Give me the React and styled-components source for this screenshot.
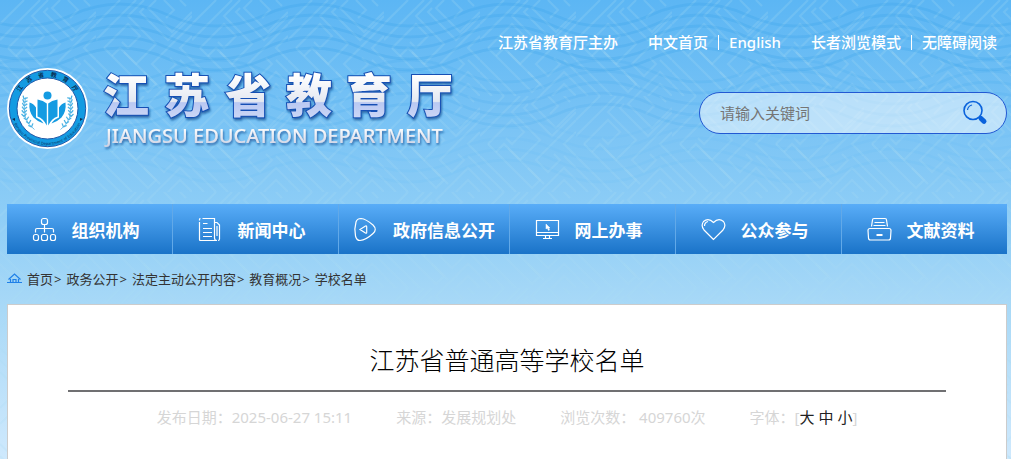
import React from 'react';
import styled, { createGlobalStyle } from 'styled-components';

const svgUrl = (svg) => `url("data:image/svg+xml,${encodeURIComponent(svg)}")`;

const wave = (y, crest) => {
  const up = `q48 -22 96 0 q48 22 97 0`;
  return `<path d="M${crest - 434} ${y + 11}${up}${up}${up}${up}"/>`;
};

const waves = svgUrl(`<svg xmlns="http://www.w3.org/2000/svg" width="193" height="200">
  <g fill="none" stroke="#349fe6" stroke-width="3">
    <g stroke-opacity=".25">${[4, 15, 26, 37, 48].map((y) => wave(y, 120)).join('')}</g>
    <g stroke-opacity=".15">${[60, 71, 82, 93, 104].map((y) => wave(y, 217)).join('')}</g>
    <g stroke-opacity=".06">${[116, 127, 138, 149, 160].map((y) => wave(y, 120)).join('')}</g>
  </g>
</svg>`);

const maze = svgUrl(`<svg xmlns="http://www.w3.org/2000/svg" width="96" height="96">
  <g fill="none" stroke="#a6dcf0" stroke-opacity=".22" stroke-width="2">
    <path d="M0 24L24 0M0 40L40 0M8 48L32 24L44 36L32 48L26 42M16 56L24 48L40 64L60 44L32 16L48 0"/>
    <path d="M48 8L44 12L72 40L96 16M60 0L52 8L76 32L96 12M68 0L78 10L70 18M84 0L96 -12M84 0L90 6"/>
    <path d="M0 60L36 96M0 72L24 96M0 84L12 96M8 48L52 92L60 84L28 52M96 24L56 64L68 76L80 64L74 58"/>
    <path d="M96 36L84 48L96 60M96 72L84 60M60 96L84 72L96 84M72 96L84 84L96 96M48 72L64 88"/>
  </g>
</svg>`);

const GlobalStyle = createGlobalStyle`
  * {
    box-sizing: border-box;
  }

  body {
    margin: 0;
    font-family: 'Noto Sans', 'Noto Sans CJK SC', sans-serif;
    font-size: 15px;
    color: #333;
    background:
      ${waves} repeat-x,
      ${maze},
      linear-gradient(#5cb6f4 0, #7bc4f5 130px, #8dcdf6 210px, #a9d9f7 310px, #cfe9fd 460px) no-repeat #cfe9fd;
  }

  a {
    color: inherit;
    text-decoration: none;
  }
`;

const Page = styled.div`
  display: flex;
  flex-direction: column;
  min-height: 100vh;
  padding: 0 4px 0 7px;
`;

const TopLinks = styled.div`
  display: flex;
  justify-content: flex-end;
  gap: 10px;
  padding-top: 32px;
`;

const LinkGroup = styled.div`
  display: flex;
  align-items: center;
  height: 20px;
`;

const TopLink = styled.a`
  padding: 0 10px;
  font-weight: 500;
  line-height: 15px;
  color: #fff;

  & + & {
    border-left: 1px solid #fff;
  }
`;

const Masthead = styled.header`
  display: flex;
  justify-content: space-between;
  align-items: flex-start;
  height: 152px;
  padding-top: 12px;
`;

const Logo = styled.svg`
  display: block;
  width: 460px;
  height: 92px;
`;

const Search = styled.form`
  display: flex;
  align-items: center;
  width: 308px;
  height: 42px;
  margin-top: 28px;
  padding: 0 18px 0 20px;
  border: 1px solid #2259d3;
  border-radius: 21px;
  background: rgba(255, 255, 255, 0.5);
`;

const SearchInput = styled.input`
  flex: 1;
  min-width: 0;
  padding: 0;
  border: 0;
  outline: 0;
  background: none;
  font: inherit;

  &::placeholder {
    color: #757575;
  }
`;

const SearchButton = styled.button`
  height: 28px;
  padding: 0;
  border: 0;
  background: none;
  color: #0962dc;
  cursor: pointer;

  svg {
    display: block;
  }
`;

const Nav = styled.nav`
  display: grid;
  grid-template-columns: 166fr 166fr 171fr 166fr 166fr 165fr;
  height: 50px;
  background: linear-gradient(#59adf8, #1a73c8);
`;

const NavItem = styled.a`
  display: flex;
  align-items: center;
  justify-content: center;
  gap: 15px;
  padding-right: ${(p) => (p.$wide ? 0 : '8px')};
  border-right: 1px solid #62a9e8;
  font-size: 17px;
  font-weight: 700;
  color: #fff;
  white-space: nowrap;

  &:last-child {
    border-right: 0;
  }
`;

const Crumbs = styled.div`
  display: flex;
  align-items: center;
  gap: 5px;
  height: 50px;
  padding-bottom: 2px;
  font-size: 13px;

  svg {
    color: #1f80e8;
  }
`;

const Crumb = styled.span`
  &:not(:last-child)::after {
    content: '>';
    margin-left: 1px;
  }
`;

const Article = styled.article`
  flex: 1;
  padding: 0 60px;
  border: 1px solid #ccc;
  border-bottom: 0;
  background: #fff;
`;

const Title = styled.h1`
  margin: 0;
  padding: 35px 0 10px;
  border-bottom: 2px solid #707072;
  font-size: 25px;
  font-weight: 300;
  line-height: 40px;
  text-align: center;
  color: #000;
`;

const Meta = styled.div`
  display: flex;
  justify-content: center;
  gap: 44px;
  padding: 13px 0 16px;
  line-height: 24px;
  color: #d6d6d6;
  white-space: nowrap;
`;

const SizeLink = styled.a`
  color: #222;
`;

const icons = {
  org: (
    <>
      <rect x="9.5" y="1.5" width="6" height="6" rx="2" />
      <path d="M12.5 7.500v8M3.500 15.500v-2.500q0-1.500 1.500-1.500h15q1.500 0 1.500 1.500v2.500" />
      <rect x="1.500" y="17.500" width="5" height="6" rx="2" />
      <rect x="9.500" y="17.500" width="6" height="6" rx="2" />
      <rect x="18.500" y="17.500" width="5" height="6" rx="2" />
    </>
  ),
  news: (
    <>
      <path d="M4.500 1.500H16.500V21q0 2.500 2.500 2.500H2.500q-1 0-1-1V5M1.500 3.500V2.500q0-1 1-1M17 5.500h2l2.500 2.500V22q0 1.500-1.500 1.500" />
      <path d="M5 6.500h4.500M5 11.500h9M5 15.500h9M5 19.500h9M19 9v10" />
    </>
  ),
  open: (
    <>
      <path d="M3 5Q4 1.500 8 1.500Q13 2 20 8Q24.500 12.500 20 16.500Q13 23 7 23.500Q3.500 23.500 2.500 19Q1 12 3 5Z" />
      <path d="M7 12.500L12.500 9q1.200-.5 1.200 1v5.500q0 1.200-1.200.5Z" />
    </>
  ),
  online: (
    <>
      <path d="M1.500 3.500h22v15h-22ZM1.500 15.500h22M10.500 18.500v3M14.500 18.500v3M8 21.500h9" />
      <path d="M11 7v5l1.300-1L13.500 13.500l1-.5-1-2h1.500Z" fill="currentColor" strokeWidth=".5" />
    </>
  ),
  heart: (
    <>
      <path d="M12.500 22.500L3 13Q-.5 8.500 2.500 4.500Q7.500.5 12.500 5.500Q17.500.5 22.500 4.500Q25.500 8.500 22 13Z" />
      <path d="M3.500 9Q3.500 5.500 7 4.500" />
    </>
  ),
  files: (
    <>
      <path d="M3 11.500h19q2 0 2 2l-.5 7.500q0 2-2 2h-18q-2 0-2-2L1 13.500q0-2 2-2ZM4.500 9.500l1-6.500q0-1.500 1.500-1.500h11q1.500 0 1.500 1.500l1 6.500M7.500 5.500h10M6.500 8.500h12" />
      <path d="M9.500 18h6" strokeWidth="2" />
    </>
  ),
};

const NavIcon = ({ name }) => (
  <svg width="25" height="25" viewBox="0 0 25 25" fill="none" stroke="currentColor" strokeWidth="1.2" aria-hidden="true">
    {icons[name]}
  </svg>
);

const navItems = [
  { icon: 'org', label: '组织机构' },
  { icon: 'news', label: '新闻中心' },
  { icon: 'open', label: '政府信息公开', wide: true },
  { icon: 'online', label: '网上办事' },
  { icon: 'heart', label: '公众参与' },
  { icon: 'files', label: '文献资料' },
];

const crumbs = ['首页', '政务公开', '法定主动公开内容', '教育概况', '学校名单'];

const Laurel = () => (
  <g stroke="#4db3e4" fill="none" strokeWidth="1.300">
    <path d="M-13 21Q-27 12 -22 -11" strokeWidth=".8" />
    {[0, 1, 2, 3, 4, 5, 6, 7, 8].map((i) => (
      <path key={i} d="M0 0l-2.500-2.500M0 0l2.500-3" transform={`translate(${-23.5 + (i < 3 ? (3 - i) * 2.5 : 0)} ${18.5 - i * 3.5}) rotate(${(3 - i) * -6})`} />
    ))}
  </g>
);

const SiteLogo = () => (
  <Logo viewBox="0 0 460 92" role="img" aria-label="江苏省教育厅">
    <defs>
      <linearGradient id="metal" x1="0" y1="0" x2="0" y2="1">
        <stop offset="0" stopColor="#fff" />
        <stop offset=".2" stopColor="#fff" />
        <stop offset=".62" stopColor="#e4e8f1" />
        <stop offset=".64" stopColor="#b9c8f2" />
        <stop offset="1" stopColor="#d5def8" />
      </linearGradient>
      <linearGradient id="silver" x1="0" y1="0" x2="0" y2="1">
        <stop offset=".2" stopColor="#fff" />
        <stop offset="1" stopColor="#c5cbe0" />
      </linearGradient>
      <filter id="shade" x="-5%" y="-10%" width="110%" height="130%">
        <feDropShadow dx="1" dy="2" stdDeviation="1" floodColor="#174c91" floodOpacity=".75" />
      </filter>
      <path id="ringTop" d="M8.500 44.500a32 32 0 0 1 64 0" />
      <path id="ringBottom" d="M4 44.500a36.500 36.500 0 0 0 73 0" />
    </defs>
    <circle cx="40.500" cy="44.500" r="40.500" fill="#fff" />
    <circle cx="40.500" cy="44.500" r="38.200" fill="#149be2" stroke="#2158a8" strokeWidth="1" />
    <circle cx="40.500" cy="44.500" r="30.500" fill="#fff" stroke="#2158a8" strokeWidth="1" />
    <text fontSize="6" fontWeight="700" fill="#092e52">
      <textPath href="#ringTop" startOffset="50%" textAnchor="middle">江　苏　省　教　育　厅</textPath>
    </text>
    <text fontSize="4" fontWeight="500" fill="#0b4779">
      <textPath href="#ringBottom" startOffset="50%" textAnchor="middle">Jiangsu Provincial Department of Education</textPath>
    </text>
    <path d="M5 55l3-1v3zM76 55l-3-1v3z" fill="#092e52" />
    <g transform="translate(40.500 44.500)">
      <Laurel />
      <g transform="scale(-1 1)"><Laurel /></g>
      <g fill="#149be2">
        <circle cx="0" cy="-13" r="4" />
        <path d="M-.7-5Q-4-8-10-9V8Q-4 10-.7 17ZM.7-5Q4-8 10-9V8Q4 10 .7 17Z" />
        <path d="M-11.500-1Q-14-5-18-6Q-19 3-14 9Q-10 13-4 15Q-6 11-11.500 9ZM11.500-1Q14-5 18-6Q19 3 14 9Q10 13 4 15Q6 11 11.500 9Z" />
      </g>
    </g>
    <g filter="url(#shade)">
      <text x="96 157 218 279 339 400" y="48" fontSize="46" fontWeight="900" fill="url(#metal)" stroke="#1550b4" strokeWidth="2" paintOrder="stroke">
        江苏省教育厅
      </text>
    </g>
    <g filter="url(#shade)">
      <text x="99" y="79" fontSize="20" fontWeight="500" fill="url(#silver)">JIANGSU EDUCATION DEPARTMENT</text>
    </g>
  </Logo>
);

const App = () => (
  <>
    <GlobalStyle />
    <Page>
      <TopLinks>
        <LinkGroup>
          <TopLink href="#">江苏省教育厅主办</TopLink>
        </LinkGroup>
        <LinkGroup>
          <TopLink href="#">中文首页</TopLink>
          <TopLink href="#">English</TopLink>
        </LinkGroup>
        <LinkGroup>
          <TopLink href="#">长者浏览模式</TopLink>
          <TopLink href="#">无障碍阅读</TopLink>
        </LinkGroup>
      </TopLinks>

      <Masthead>
        <SiteLogo />
        <Search onSubmit={(e) => e.preventDefault()}>
          <SearchInput type="text" placeholder="请输入关键词" aria-label="请输入关键词" />
          <SearchButton type="submit" aria-label="搜索">
            <svg width="26" height="26" viewBox="0 0 26 26" fill="none" stroke="currentColor">
              <circle cx="11" cy="10.500" r="9" strokeWidth="1.600" />
              <path d="M5.500 10Q6 6 10 5" strokeWidth="1.200" />
              <path d="M17 17l2 2" strokeWidth="2" />
              <path d="M19 18.500l3 2.800" strokeWidth="5" strokeLinecap="round" />
            </svg>
          </SearchButton>
        </Search>
      </Masthead>

      <Nav>
        {navItems.map((item) => (
          <NavItem href="#" key={item.label} $wide={item.wide}>
            <NavIcon name={item.icon} />
            {item.label}
          </NavItem>
        ))}
      </Nav>

      <Crumbs>
        <svg width="15" height="12" viewBox="0 0 15 12" fill="none" stroke="currentColor" strokeWidth="1.200" aria-hidden="true">
          <path d="M1.500 7.500L7.500 2l6 5.500M0 10.500h15M3.500 7v3.500M11.500 7v3.500M6 10.500V7.500h3v3" />
        </svg>
        {crumbs.map((name) => (
          <Crumb key={name}>
            <a href="#">{name}</a>
          </Crumb>
        ))}
      </Crumbs>

      <Article>
        <Title>江苏省普通高等学校名单</Title>
        <Meta>
          <span>发布日期：2025-06-27 15:11</span>
          <span>来源：发展规划处</span>
          <span>浏览次数： 409760次</span>
          <span>
            字体：[<SizeLink href="#">大</SizeLink> <SizeLink href="#">中</SizeLink> <SizeLink href="#">小</SizeLink>]
          </span>
        </Meta>
      </Article>
    </Page>
  </>
);

export default App;
